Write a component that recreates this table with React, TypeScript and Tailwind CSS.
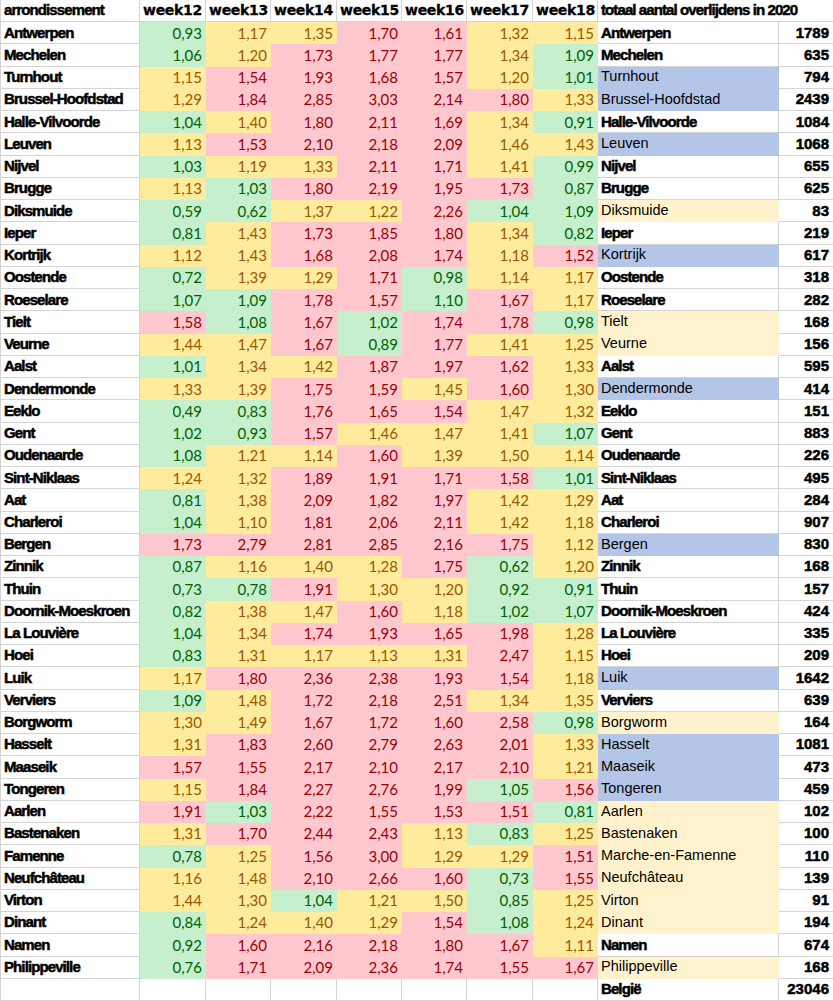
import React, { FC } from 'react';

type NameStyle = 'bold' | 'blue' | 'cream';

interface Row {
  name: string;
  values: number[];
  label: string;
  style: NameStyle;
  total: string;
}

// Charleroi wk13 is just above 1.10, so it gets the yellow fill
const rows: Row[] = [
  { name: 'Antwerpen', values: [0.93, 1.17, 1.35, 1.7, 1.61, 1.32, 1.15], label: 'Antwerpen', style: 'bold', total: '1789' },
  { name: 'Mechelen', values: [1.06, 1.2, 1.73, 1.77, 1.77, 1.34, 1.09], label: 'Mechelen', style: 'bold', total: '635' },
  { name: 'Turnhout', values: [1.15, 1.54, 1.93, 1.68, 1.57, 1.2, 1.01], label: 'Turnhout', style: 'blue', total: '794' },
  { name: 'Brussel-Hoofdstad', values: [1.29, 1.84, 2.85, 3.03, 2.14, 1.8, 1.33], label: 'Brussel-Hoofdstad', style: 'blue', total: '2439' },
  { name: 'Halle-Vilvoorde', values: [1.04, 1.4, 1.8, 2.11, 1.69, 1.34, 0.91], label: 'Halle-Vilvoorde', style: 'bold', total: '1084' },
  { name: 'Leuven', values: [1.13, 1.53, 2.1, 2.18, 2.09, 1.46, 1.43], label: 'Leuven', style: 'blue', total: '1068' },
  { name: 'Nijvel', values: [1.03, 1.19, 1.33, 2.11, 1.71, 1.41, 0.99], label: 'Nijvel', style: 'bold', total: '655' },
  { name: 'Brugge', values: [1.13, 1.03, 1.8, 2.19, 1.95, 1.73, 0.87], label: 'Brugge', style: 'bold', total: '625' },
  { name: 'Diksmuide', values: [0.59, 0.62, 1.37, 1.22, 2.26, 1.04, 1.09], label: 'Diksmuide', style: 'cream', total: '83' },
  { name: 'Ieper', values: [0.81, 1.43, 1.73, 1.85, 1.8, 1.34, 0.82], label: 'Ieper', style: 'bold', total: '219' },
  { name: 'Kortrijk', values: [1.12, 1.43, 1.68, 2.08, 1.74, 1.18, 1.52], label: 'Kortrijk', style: 'blue', total: '617' },
  { name: 'Oostende', values: [0.72, 1.39, 1.29, 1.71, 0.98, 1.14, 1.17], label: 'Oostende', style: 'bold', total: '318' },
  { name: 'Roeselare', values: [1.07, 1.09, 1.78, 1.57, 1.1, 1.67, 1.17], label: 'Roeselare', style: 'bold', total: '282' },
  { name: 'Tielt', values: [1.58, 1.08, 1.67, 1.02, 1.74, 1.78, 0.98], label: 'Tielt', style: 'cream', total: '168' },
  { name: 'Veurne', values: [1.44, 1.47, 1.67, 0.89, 1.77, 1.41, 1.25], label: 'Veurne', style: 'cream', total: '156' },
  { name: 'Aalst', values: [1.01, 1.34, 1.42, 1.87, 1.97, 1.62, 1.33], label: 'Aalst', style: 'bold', total: '595' },
  { name: 'Dendermonde', values: [1.33, 1.39, 1.75, 1.59, 1.45, 1.6, 1.3], label: 'Dendermonde', style: 'blue', total: '414' },
  { name: 'Eeklo', values: [0.49, 0.83, 1.76, 1.65, 1.54, 1.47, 1.32], label: 'Eeklo', style: 'bold', total: '151' },
  { name: 'Gent', values: [1.02, 0.93, 1.57, 1.46, 1.47, 1.41, 1.07], label: 'Gent', style: 'bold', total: '883' },
  { name: 'Oudenaarde', values: [1.08, 1.21, 1.14, 1.6, 1.39, 1.5, 1.14], label: 'Oudenaarde', style: 'bold', total: '226' },
  { name: 'Sint-Niklaas', values: [1.24, 1.32, 1.89, 1.91, 1.71, 1.58, 1.01], label: 'Sint-Niklaas', style: 'bold', total: '495' },
  { name: 'Aat', values: [0.81, 1.38, 2.09, 1.82, 1.97, 1.42, 1.29], label: 'Aat', style: 'bold', total: '284' },
  { name: 'Charleroi', values: [1.04, 1.101, 1.81, 2.06, 2.11, 1.42, 1.18], label: 'Charleroi', style: 'bold', total: '907' },
  { name: 'Bergen', values: [1.73, 2.79, 2.81, 2.85, 2.16, 1.75, 1.12], label: 'Bergen', style: 'blue', total: '830' },
  { name: 'Zinnik', values: [0.87, 1.16, 1.4, 1.28, 1.75, 0.62, 1.2], label: 'Zinnik', style: 'bold', total: '168' },
  { name: 'Thuin', values: [0.73, 0.78, 1.91, 1.3, 1.2, 0.92, 0.91], label: 'Thuin', style: 'bold', total: '157' },
  { name: 'Doornik-Moeskroen', values: [0.82, 1.38, 1.47, 1.6, 1.18, 1.02, 1.07], label: 'Doornik-Moeskroen', style: 'bold', total: '424' },
  { name: 'La Louvière', values: [1.04, 1.34, 1.74, 1.93, 1.65, 1.98, 1.28], label: 'La Louvière', style: 'bold', total: '335' },
  { name: 'Hoei', values: [0.83, 1.31, 1.17, 1.13, 1.31, 2.47, 1.15], label: 'Hoei', style: 'bold', total: '209' },
  { name: 'Luik', values: [1.17, 1.8, 2.36, 2.38, 1.93, 1.54, 1.18], label: 'Luik', style: 'blue', total: '1642' },
  { name: 'Verviers', values: [1.09, 1.48, 1.72, 2.18, 2.51, 1.34, 1.35], label: 'Verviers', style: 'bold', total: '639' },
  { name: 'Borgworm', values: [1.3, 1.49, 1.67, 1.72, 1.6, 2.58, 0.98], label: 'Borgworm', style: 'cream', total: '164' },
  { name: 'Hasselt', values: [1.31, 1.83, 2.6, 2.79, 2.63, 2.01, 1.33], label: 'Hasselt', style: 'blue', total: '1081' },
  { name: 'Maaseik', values: [1.57, 1.55, 2.17, 2.1, 2.17, 2.1, 1.21], label: 'Maaseik', style: 'blue', total: '473' },
  { name: 'Tongeren', values: [1.15, 1.84, 2.27, 2.76, 1.99, 1.05, 1.56], label: 'Tongeren', style: 'blue', total: '459' },
  { name: 'Aarlen', values: [1.91, 1.03, 2.22, 1.55, 1.53, 1.51, 0.81], label: 'Aarlen', style: 'cream', total: '102' },
  { name: 'Bastenaken', values: [1.31, 1.7, 2.44, 2.43, 1.13, 0.83, 1.25], label: 'Bastenaken', style: 'cream', total: '100' },
  { name: 'Famenne', values: [0.78, 1.25, 1.56, 3.0, 1.29, 1.29, 1.51], label: 'Marche-en-Famenne', style: 'cream', total: '110' },
  { name: 'Neufchâteau', values: [1.16, 1.48, 2.1, 2.66, 1.6, 0.73, 1.55], label: 'Neufchâteau', style: 'cream', total: '139' },
  { name: 'Virton', values: [1.44, 1.3, 1.04, 1.21, 1.5, 0.85, 1.25], label: 'Virton', style: 'cream', total: '91' },
  { name: 'Dinant', values: [0.84, 1.24, 1.4, 1.29, 1.54, 1.08, 1.24], label: 'Dinant', style: 'cream', total: '194' },
  { name: 'Namen', values: [0.92, 1.6, 2.16, 2.18, 1.8, 1.67, 1.11], label: 'Namen', style: 'bold', total: '674' },
  { name: 'Philippeville', values: [0.76, 1.71, 2.09, 2.36, 1.74, 1.55, 1.67], label: 'Philippeville', style: 'cream', total: '168' },
];

const weeks = ['week12', 'week13', 'week14', 'week15', 'week16', 'week17', 'week18'];

const boldText =
  "font-['Liberation_Sans',Arial,sans-serif] font-bold text-[15px] tracking-[-0.9px] [-webkit-text-stroke:0.5px_black] text-black";

const toneClass = (v: number) => {
  if (v <= 1.1) return 'bg-[#c6efce] border-[#c6efce] text-[#006100]';
  if (v <= 1.5) return 'bg-[#ffeb9c] border-[#ffeb9c] text-[#9c5700]';
  return 'bg-[#ffc7ce] border-[#ffc7ce] text-[#9c0006]';
};

const labelClass: Record<NameStyle, string> = {
  bold: `bg-white border-[#d4d4d4] ${boldText}`,
  blue: "bg-[#b4c6e7] border-[#b4c6e7] font-['Liberation_Sans',Arial,sans-serif] text-[14.5px] text-black",
  cream: "bg-[#fff2cc] border-[#fff2cc] font-['Liberation_Sans',Arial,sans-serif] text-[14.5px] text-black",
};

const fmt = (v: number) => v.toFixed(2).replace('.', ',');

const App: FC = () => {
  return (
    <div className="w-[833px] h-[1001px] bg-white overflow-hidden">
      <div className="grid h-full grid-cols-[139px_66px_65px_66px_65px_65px_66px_65px_181px_55px] grid-rows-[repeat(45,minmax(0,1fr))] border-l border-[#d4d4d4]">
        {/* header */}
        <div className={`flex items-center pl-[3px] border-r border-b border-[#d4d4d4] whitespace-nowrap ${boldText}`}>
          arrondissement
        </div>
        {weeks.map((w) => (
          <div
            key={w}
            className="flex items-center pl-[3px] border-r border-b border-[#d4d4d4] whitespace-nowrap font-['DejaVu_Sans',sans-serif] font-bold text-[14px] tracking-[-0.3px] [-webkit-text-stroke:0.3px_black] text-black"
          >
            {w}
          </div>
        ))}
        <div className={`col-span-2 flex items-center pl-[3px] border-b border-[#d4d4d4] whitespace-nowrap ${boldText} tracking-[-0.2px]`}>
          totaal aantal overlijdens in 2020
        </div>

        {rows.map((row) => (
          <React.Fragment key={row.name}>
            <div className={`flex items-center pl-[3px] border-r border-b border-[#d4d4d4] whitespace-nowrap ${boldText}`}>
              {row.name}
            </div>
            {row.values.map((v, i) => (
              <div
                key={i}
                className={`flex items-center justify-end pr-[3px] border-r border-b font-['Lato',sans-serif] text-[15px] ${toneClass(v)}`}
              >
                {fmt(v)}
              </div>
            ))}
            <div className={`flex items-center pl-[3px] border-r border-b whitespace-nowrap ${labelClass[row.style]}`}>
              {row.label}
            </div>
            <div className={`flex items-center justify-end pr-[4px] border-r border-b border-[#d4d4d4] ${boldText} tracking-[0px]`}>
              {row.total}
            </div>
          </React.Fragment>
        ))}

        {/* footer */}
        {Array.from({ length: 8 }).map((_, i) => (
          <div key={i} className="border-r border-b border-[#d4d4d4]" />
        ))}
        <div className={`flex items-center pl-[3px] border-r border-b border-[#d4d4d4] ${boldText}`}>
          België
        </div>
        <div className={`flex items-center justify-end pr-[4px] border-r border-b border-[#d4d4d4] ${boldText} tracking-[0px]`}>
          23046
        </div>
      </div>
    </div>
  );
};

export default App;
